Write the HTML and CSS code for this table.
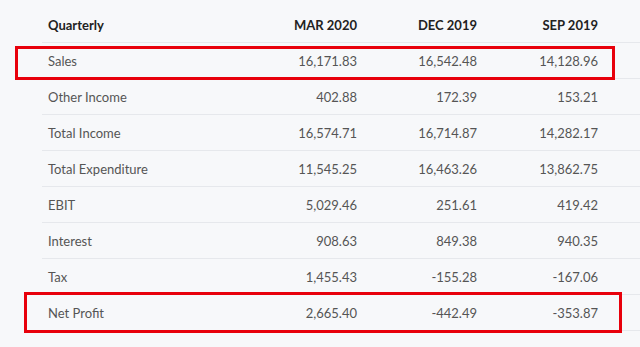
FILE: index.html
```html
<!DOCTYPE html>
<html lang="en">
<head>
    <meta charset="UTF-8">
    <title>Quarterly Results</title>
    <link rel="stylesheet" href="styles.css">
</head>
<body>
    <div class="results">
        <div class="row head">
            <span>Quarterly</span>
            <span>MAR 2020</span>
            <span>DEC 2019</span>
            <span>SEP 2019</span>
        </div>
        <div class="row">
            <span>Sales</span><span>16,171.83</span><span>16,542.48</span><span>14,128.96</span>
        </div>
        <div class="row">
            <span>Other Income</span><span>402.88</span><span>172.39</span><span>153.21</span>
        </div>
        <div class="row">
            <span>Total Income</span><span>16,574.71</span><span>16,714.87</span><span>14,282.17</span>
        </div>
        <div class="row">
            <span>Total Expenditure</span><span>11,545.25</span><span>16,463.26</span><span>13,862.75</span>
        </div>
        <div class="row">
            <span>EBIT</span><span>5,029.46</span><span>251.61</span><span>419.42</span>
        </div>
        <div class="row">
            <span>Interest</span><span>908.63</span><span>849.38</span><span>940.35</span>
        </div>
        <div class="row">
            <span>Tax</span><span>1,455.43</span><span>-155.28</span><span>-167.06</span>
        </div>
        <div class="row">
            <span>Net Profit</span><span>2,665.40</span><span>-442.49</span><span>-353.87</span>
        </div>

        <!-- highlight boxes drawn over the table -->
        <div class="mark mark-sales"></div>
        <div class="mark mark-profit"></div>
    </div>
</body>
</html>
```

FILE: styles.css
```css
* {
    margin: 0;
    padding: 0;
    box-sizing: border-box;
}

body {
    font-family: Lato, 'Liberation Sans', sans-serif;
    background: #f7f8fa;
    color: #555;
    width: 640px;
    height: 347px;
    overflow: hidden;
}

.results {
    position: relative;
    padding-top: 7px;
    padding-left: 42px;
}

.row {
    display: grid;
    grid-template-columns: 1fr 120px 120px 121px;
    align-items: center;
    height: 36px;
    padding: 0 42px 0 6px;
    border-bottom: 1px solid #e6e8ec;
    font-size: 13px;
}

.row span:not(:first-child) {
    text-align: right;
}

.head {
    font-weight: 700;
    color: #222;
}

.mark {
    position: absolute;
    border: 3px solid #e8000b;
}

.mark-sales {
    left: 15px;
    top: 46px;
    width: 600px;
    height: 34px;
}

.mark-profit {
    left: 24px;
    top: 292px;
    width: 598px;
    height: 41px;
}
```
